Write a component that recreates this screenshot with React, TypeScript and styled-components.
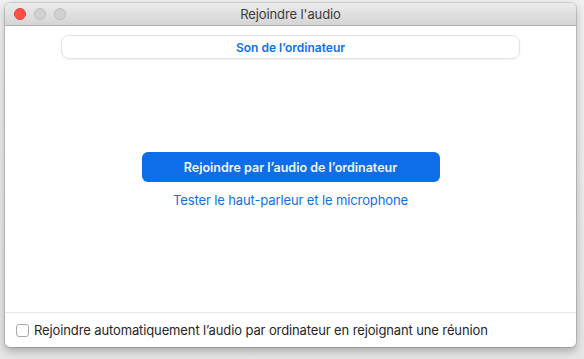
import styled, { createGlobalStyle } from 'styled-components';

const GlobalStyle = createGlobalStyle`
  html, body {
    margin: 0;
    padding: 0;
    background: #ececec;
    font-family: Inter, "Liberation Sans", sans-serif;
  }
`;

const Page = styled.div`
  width: 584px;
  height: 359px;
  box-sizing: border-box;
  padding: 3px 8px 12px 5px;
  background: linear-gradient(180deg, #f0f0f0 0%, #e6e6e6 100%);
`;

const Window = styled.div`
  width: 571px;
  height: 344px;
  display: flex;
  flex-direction: column;
  background: #ffffff;
  border-radius: 5px;
  overflow: hidden;
  box-shadow: 0 0 0 1px rgba(0, 0, 0, 0.12), 0 4px 10px rgba(0, 0, 0, 0.28);
`;

const TitleBar = styled.div`
  height: 22px;
  flex: none;
  display: grid;
  grid-template-columns: 1fr auto 1fr;
  align-items: center;
  padding: 0 9px;
  background: linear-gradient(180deg, #ebebeb 0%, #d5d5d5 100%);
  border-bottom: 1px solid #b4b4b4;
`;

const Lights = styled.div`
  display: flex;
  gap: 8px;
`;

const Light = styled.span<{ $color: string; $border: string }>`
  width: 12px;
  height: 12px;
  border-radius: 50%;
  box-sizing: border-box;
  background: ${p => p.$color};
  border: 1px solid ${p => p.$border};
`;

const Title = styled.div`
  font-size: 13px;
  color: #3c3c3c;
  letter-spacing: -0.1px;
`;

const Body = styled.div`
  flex: 1;
  display: flex;
  flex-direction: column;
  align-items: center;
  padding-top: 9px;
`;

const Segment = styled.div`
  width: 459px;
  height: 24px;
  box-sizing: border-box;
  border: 1px solid #e2e2e8;
  border-radius: 8px;
  box-shadow: 0 1px 2px rgba(0, 0, 0, 0.06);
  display: flex;
  align-items: center;
  justify-content: center;
  font-size: 12px;
  font-weight: 600;
  color: #0e6fe8;
`;

const JoinButton = styled.button`
  margin-top: 93px;
  width: 298px;
  height: 30px;
  border: none;
  border-radius: 6px;
  background: #0e6ee9;
  color: #f2f6fd;
  font-family: inherit;
  font-size: 12.5px;
  font-weight: 600;
  cursor: pointer;
`;

const TestLink = styled.a`
  margin-top: 10px;
  font-size: 13px;
  letter-spacing: -0.12px;
  color: #0e6fe8;
  text-decoration: none;
  cursor: pointer;
`;

const Footer = styled.label`
  height: 34px;
  flex: none;
  display: flex;
  align-items: center;
  gap: 5px;
  padding-left: 11px;
  border-top: 1px solid #e6e6ec;
  font-size: 13px;
  letter-spacing: -0.12px;
  color: #262626;
`;

const Check = styled.span`
  width: 13px;
  height: 13px;
  box-sizing: border-box;
  border: 1px solid #a9a9a9;
  border-radius: 3px;
  background: #fff;
`;

export default function App() {
  return (
    <>
      <GlobalStyle />
      <Page>
        <Window>
          <TitleBar>
            <Lights>
              <Light $color="#fe4f47" $border="#e0443e" />
              <Light $color="#d1d1d1" $border="#bdbdbd" />
              <Light $color="#d1d1d1" $border="#bdbdbd" />
            </Lights>
            <Title>Rejoindre l'audio</Title>
            <span />
          </TitleBar>
          <Body>
            <Segment>Son de l’ordinateur</Segment>
            <JoinButton>Rejoindre par l’audio de l’ordinateur</JoinButton>
            <TestLink>Tester le haut-parleur et le microphone</TestLink>
          </Body>
          <Footer>
            <Check />
            Rejoindre automatiquement l’audio par ordinateur en rejoignant une réunion
          </Footer>
        </Window>
      </Page>
    </>
  );
}
